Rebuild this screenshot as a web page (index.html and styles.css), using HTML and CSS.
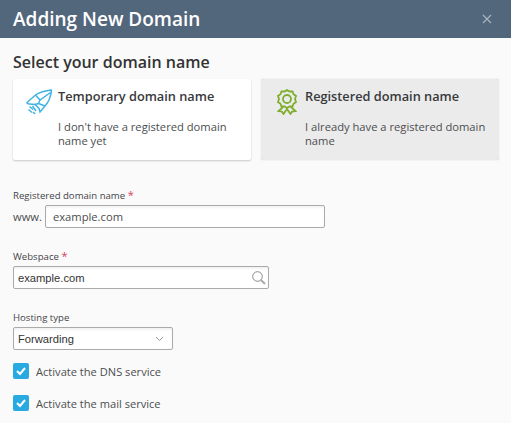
FILE: index.html
```html
<!DOCTYPE html>
<html lang="en">
  <head>
    <meta charset="UTF-8" />
    <title>Adding New Domain</title>
    <link rel="stylesheet" href="styles.css">
  </head>
  <body>
    <div class="header">
      <h1>Adding New Domain</h1>
      <svg class="close" width="12" height="12" viewBox="0 0 12 12">
        <path d="M2 2 L10 10 M10 2 L2 10" />
      </svg>
    </div>

    <div class="content">
      <h2>Select your domain name</h2>

      <div class="cards">
        <div class="card">
          <svg class="card-icon rocket" width="26" height="26" viewBox="0 0 26 26">
            <path d="M25.500 1 C20 1.500 14 3 9.500 6 L1 13.500 C1 14.500 2 15 3.500 15 L9 15.500 L13 19.500 L14 23 L19 17 C23 12.500 25 7 25.500 1 Z" />
            <path d="M9.500 6 L14 11 L24.500 3.500 M14 11 L12.500 14.500 L9 15.500 M12.500 14.500 L19 17" />
            <path d="M3.500 17.500 L7 20.500 M2.500 20.500 L6 23.500 M6.500 17 L10 22 M7 23 L9 25" />
          </svg>
          <div class="card-text">
            <div class="card-title">Temporary domain name</div>
            <div class="card-desc">I don't have a registered domain name yet</div>
          </div>
        </div>

        <div class="card selected">
          <svg class="card-icon award" width="20" height="26" viewBox="0 0 20 26">
            <path d="M10 1 L12.500 2.500 L15.500 2.500 L16.500 5.200 L19 7 L18 10 L19 13 L16.500 14.800 L15.500 17.500 L12.500 17.500 L10 19 L7.500 17.500 L4.500 17.500 L3.500 14.800 L1 13 L2 10 L1 7 L3.500 5.200 L4.500 2.500 L7.500 2.500 Z" />
            <circle cx="10" cy="10" r="4" />
            <path d="M6 18 L1.500 22 L5 22.500 L6.500 25 L10 20 L13.500 25 L15 22.500 L18.500 22 L14 18" />
          </svg>
          <div class="card-text">
            <div class="card-title">Registered domain name</div>
            <div class="card-desc">I already have a registered domain name</div>
          </div>
        </div>
      </div>

      <div class="field field-domain">
        <label>Registered domain name <span class="req">*</span></label>
        <div class="www-row">
          <span class="www">www.</span>
          <div class="input input-domain">example.com</div>
        </div>
      </div>

      <div class="field field-webspace">
        <label>Webspace <span class="req">*</span></label>
        <div class="input input-webspace">
          <span>example.com</span>
          <svg width="14" height="14" viewBox="0 0 14 14">
            <circle cx="5.500" cy="5.500" r="4.800" />
            <path class="handle" d="M9 9 L13 13" />
          </svg>
        </div>
      </div>

      <div class="field field-hosting">
        <label>Hosting type</label>
        <div class="input input-hosting">
          <span>Forwarding</span>
          <svg width="9" height="6" viewBox="0 0 9 6">
            <path d="M1 1 L4.500 4.500 L8 1" />
          </svg>
        </div>
      </div>

      <div class="check">
        <span class="box">
          <svg width="16" height="16" viewBox="0 0 16 16"><path d="M4 8 L7 11 L12 5" /></svg>
        </span>
        Activate the DNS service
      </div>
      <div class="check">
        <span class="box">
          <svg width="16" height="16" viewBox="0 0 16 16"><path d="M4 8 L7 11 L12 5" /></svg>
        </span>
        Activate the mail service
      </div>
    </div>
  </body>
</html>
```
FILE: styles.css
```css
* {
  box-sizing: border-box;
  font-family: "Open Sans", sans-serif;
}

html,
body {
  height: 100%;
}

body {
  margin: 0;
  background-color: #fafafa;
  color: #222;
  overflow: hidden;
}

.header {
  height: 38px;
  padding: 0 18px 0 13px;
  background-color: #53677c;
  display: flex;
  align-items: center;
  justify-content: space-between;
}

.header h1 {
  margin: 0;
  font-size: 19px;
  font-weight: 600;
  color: #fff;
}

.close path {
  stroke: #a9b4bf;
  stroke-width: 1.2;
  fill: none;
}

.content {
  padding: 13px 12px 0 13px;
}

.content h2 {
  margin: 0;
  font-size: 16px;
  line-height: 22px;
  font-weight: 600;
  color: #333;
}

.cards {
  margin-top: 6px;
  display: flex;
  gap: 10px;
}

.card {
  width: 238px;
  height: 81px;
  padding: 8px 10px 0 13px;
  background-color: #fff;
  border-radius: 2px;
  box-shadow: 0 1px 2px rgba(0, 0, 0, 0.2);
  display: flex;
}

.card.selected {
  background-color: #ebebeb;
  box-shadow: 0 0 1px rgba(0, 0, 0, 0.3);
  padding-left: 16px;
}

.card-icon {
  flex: none;
  margin: 2px 6px 0 0;
}

.card.selected .card-icon {
  margin-right: 8px;
}

.card-icon path,
.card-icon circle {
  fill: none;
  stroke-width: 1.500;
}

.rocket path {
  stroke: #3fb2e3;
}

.award path,
.award circle {
  stroke: #7fae2e;
  stroke-width: 1.800;
}

.card-title {
  font-size: 12.750px;
  line-height: 18px;
  font-weight: 600;
  color: #38393c;
}

.card-desc {
  margin-top: 15px;
  font-size: 11.200px;
  line-height: 14px;
  color: #4b4d50;
}

.field label {
  display: block;
  font-size: 9.600px;
  line-height: 14px;
  color: #43454a;
}

.req {
  color: #d9405f;
  font-size: 11px;
  line-height: 10px;
}

.field-domain {
  margin-top: 29px;
}

.www-row {
  margin-top: 2px;
  display: flex;
  align-items: center;
  gap: 3px;
}

.www {
  font-size: 11.200px;
  color: #4b4d50;
}

.input {
  height: 23px;
  background-color: #fff;
  border: 1px solid #aaa;
  border-radius: 2px;
  box-shadow: inset 0 2px 2px rgba(0, 0, 0, 0.05);
  font-size: 11.200px;
  display: flex;
  align-items: center;
  justify-content: space-between;
}

.input-domain {
  width: 280px;
  padding-left: 7px;
  color: #4b4d50;
}

.field-webspace {
  margin-top: 22px;
}

.input-webspace {
  margin-top: 2px;
  width: 256px;
  padding: 0 2px 0 4px;
  color: #333;
}

.input-webspace span,
.input-hosting span {
  font-family: "Liberation Sans", sans-serif;
}

.input-webspace circle {
  fill: none;
  stroke: #888;
}

.input-webspace .handle {
  stroke: #aaa;
  stroke-width: 2;
}

.field-hosting {
  margin-top: 22px;
}

.input-hosting {
  margin-top: 2px;
  width: 160px;
  padding: 0 8px 0 4px;
  color: #333;
}

.input-hosting path {
  fill: none;
  stroke: #999;
}

.check {
  height: 16px;
  margin-top: 16px;
  display: flex;
  align-items: center;
  gap: 7px;
  font-size: 11.100px;
  color: #4b4d50;
}

.field + .check {
  margin-top: 13px;
}

.box {
  width: 16px;
  height: 16px;
  background-color: #28aae1;
  border-radius: 2px;
  display: flex;
}

.box path {
  fill: none;
  stroke: #fff;
  stroke-width: 2;
}
```
